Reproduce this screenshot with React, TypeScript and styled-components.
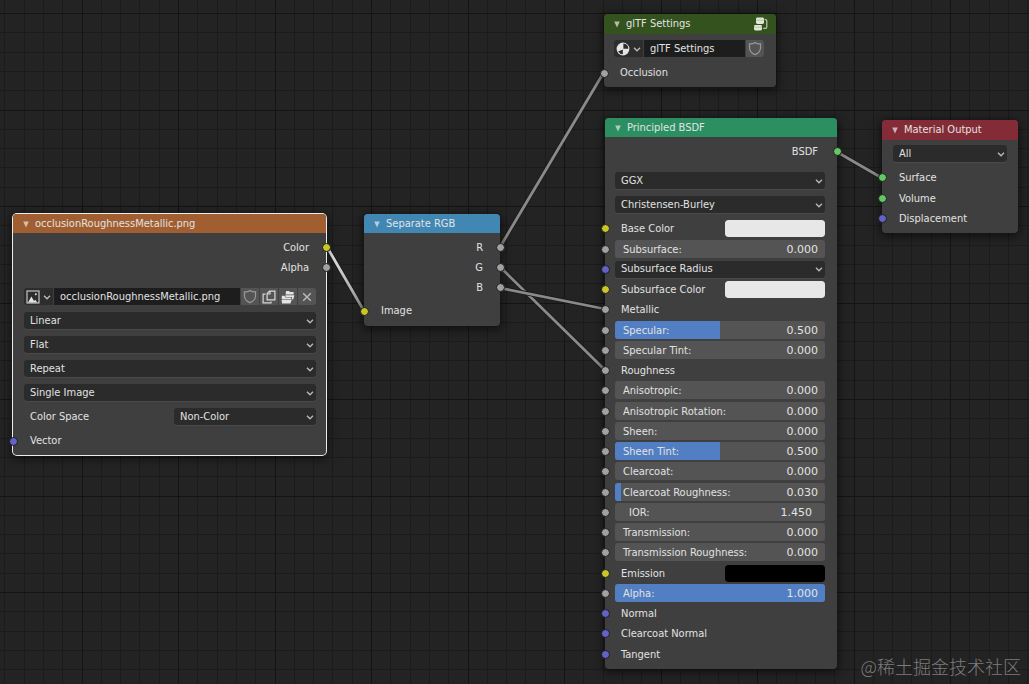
import React, { useId, useState } from 'react';
import styled, { createGlobalStyle } from 'styled-components';

const ui = '"DejaVu Sans Condensed", "DejaVu Sans", sans-serif';
const numeric = '"DejaVu Sans", sans-serif';

const GlobalStyle = createGlobalStyle`
  *, *::before, *::after { box-sizing: border-box; }
  body { margin: 0; background: #232323; overflow: hidden; }
  button, input, select { font: inherit; color: inherit; margin: 0; padding: 0; border: 0; border-radius: 0; background: none; }
  :focus-visible { outline: 1px solid #527fc3; }
`;

const Canvas = styled.main`
  position: relative;
  min-height: 100vh;
  overflow: hidden;
  background: #232323;
  color: #e2e2e2;
  font: 11px/16px ${ui};
`;

const Layer = styled.svg`
  position: absolute;
  inset: 0;
  width: 100%;
  height: 100%;
`;

const Frame = styled.section<{ $x: number; $y: number; $width: number; $left: number; $right: number; $active?: boolean }>`
  --pad-left: ${(p) => p.$left}px;
  --pad-right: ${(p) => p.$right}px;
  position: absolute;
  left: ${(p) => p.$x}px;
  top: ${(p) => p.$y}px;
  width: ${(p) => p.$width}px;
  border-radius: 4px;
  background: #3f3f3f;
  box-shadow: ${(p) => (p.$active ? '0 0 0 1px #ececec, ' : '')}0 2px 8px 2px rgba(0, 0, 0, 0.5);
`;

const Header = styled.header<{ $color: string; $height: number }>`
  display: flex;
  align-items: center;
  gap: 5px;
  height: ${(p) => p.$height}px;
  padding: 0 8px 0 9px;
  border-radius: 4px 4px 0 0;
  background: ${(p) => p.$color};
`;

const Title = styled.h2`
  flex: 1;
  margin: 0;
  font: inherit;
  white-space: nowrap;
`;

const Collapse = styled.button`
  display: flex;
  align-items: center;
  width: 8px;
  height: 16px;
  opacity: 0.75;
`;

const Body = styled.div<{ $top: number; $bottom: number }>`
  padding: ${(p) => p.$top}px 0 ${(p) => p.$bottom}px;
`;

const Row = styled.div<{ $tall?: boolean }>`
  position: relative;
  display: flex;
  align-items: center;
  height: ${(p) => (p.$tall ? 24 : 20)}px;
  padding: 0 var(--pad-right) ${(p) => (p.$tall ? 1 : 0)}px var(--pad-left);
`;

const Group = styled.div<{ $gap: number }>`
  margin-top: ${(p) => p.$gap}px;
`;

const Inputs = styled(Group)`
  ${Row}:nth-child(4n + 1) { margin-bottom: 1px; }
`;

const Label = styled.span<{ $end?: boolean }>`
  flex: 1;
  padding: 1px 7px 0 6px;
  text-align: ${(p) => (p.$end ? 'right' : 'left')};
  white-space: nowrap;
`;

const socketColors = { color: '#c7c729', value: '#a1a1a1', vector: '#6363c7', shader: '#63c763' };
type SocketKind = keyof typeof socketColors;

const Socket = styled.i<{ $kind: SocketKind; $out?: boolean }>`
  position: absolute;
  top: 50%;
  ${(p) => (p.$out ? 'right: -5px' : 'left: -4px')};
  width: 9px;
  height: 9px;
  margin-top: -4px;
  border: 1px solid #1c1c1c;
  border-radius: 50%;
  background: ${(p) => socketColors[p.$kind]};
`;

const SelectBox = styled.span`
  flex: 1;
  display: grid;
  align-items: center;
  height: 17px;
  border-radius: 3px;
  background: #2b2b2b;
  box-shadow: 0 1px 0 #4a4a4a;
  > * { grid-area: 1 / 1; }
  > svg { justify-self: end; margin-right: 1px; pointer-events: none; }
`;

const NativeSelect = styled.select`
  width: 100%;
  height: 17px;
  padding: 0 16px 0 6px;
  appearance: none;
`;

const FieldBox = styled.label`
  flex: 1;
  display: grid;
  grid-template-columns: 1fr auto;
  align-items: center;
  height: 18px;
  border-radius: 3px;
  overflow: hidden;
  background: #545454;
`;

const Range = styled.input`
  grid-area: 1 / 1 / 2 / 3;
  width: 100%;
  height: 18px;
  appearance: none;
  background: linear-gradient(#527fc3, #527fc3) 0 0 / var(--fill) 100% no-repeat;
  &::-webkit-slider-thumb { appearance: none; width: 1px; height: 18px; background: transparent; }
`;

const FieldName = styled.span<{ $pad: number }>`
  grid-area: 1 / 1;
  padding: 1px 0 0 ${(p) => p.$pad}px;
  white-space: nowrap;
  pointer-events: none;
`;

const FieldValue = styled.output`
  grid-area: 1 / 2;
  padding: 1px 7px 0 0;
  font-family: ${numeric};
  pointer-events: none;
`;

const NumberInput = styled.input`
  grid-area: 1 / 2;
  width: 60px;
  padding: 1px 13px 0 0;
  font-family: ${numeric};
  text-align: right;
`;

const Swatch = styled.input`
  width: 100px;
  height: 17px;
  appearance: none;
  border-radius: 3px;
  overflow: hidden;
  &::-webkit-color-swatch-wrapper { padding: 0; }
  &::-webkit-color-swatch { border: 0; border-radius: 3px; }
`;

const SwatchRow = styled.label`
  flex: 1;
  display: flex;
  align-items: center;
`;

const DataBlock = styled.div`
  flex: 1;
  display: flex;
  gap: 1px;
  height: 17px;
  border-radius: 3px;
  overflow: hidden;
`;

const Browse = styled.button`
  display: flex;
  align-items: center;
  justify-content: space-between;
  width: 29px;
  padding: 0 1px 0 2px;
  background: #2d2d2d;
`;

const NameInput = styled.input`
  flex: 1;
  min-width: 0;
  padding: 0 6px;
  background: #1d1d1d;
`;

const IconButton = styled.button`
  display: flex;
  align-items: center;
  justify-content: center;
  width: 18px;
  background: #545454;
`;

const ColorSpaceLabel = styled.label`
  flex: 1;
  padding: 1px 0 0 6px;
`;

const HalfWidth = styled.div`
  display: flex;
  width: 142px;
`;

const Watermark = styled.p`
  position: absolute;
  right: 8px;
  bottom: 6px;
  margin: 0;
  color: #7c7c7c;
  font: 300 18px/24px "Noto Sans CJK SC", sans-serif;
`;

const Chevron = () => (
  <svg width="10" height="10" viewBox="0 0 10 10" fill="none" stroke="#b8b8b8" strokeWidth="1.4" aria-hidden="true">
    <path d="M2 3.7 5 6.7 8 3.7" />
  </svg>
);

const Triangle = () => (
  <svg width="8" height="8" viewBox="0 0 8 8" fill="#e2e2e2" aria-hidden="true">
    <path d="M1.2 1.4H6.8L4 7.6Z" />
  </svg>
);

const ShieldIcon = () => (
  <svg width="14" height="15" viewBox="0 0 14 15" fill="none" stroke="#989898" strokeWidth="1.2" aria-hidden="true">
    <path d="M7 1.5C5.5 2.7 3.6 3 1.5 2.9V7.2C1.7 10.3 4 12.4 7 13.6 10 12.4 12.3 10.3 12.5 7.2V2.9C10.4 3 8.5 2.7 7 1.5Z" />
  </svg>
);

const MaterialIcon = () => (
  <svg width="14" height="14" viewBox="0 0 14 14" aria-hidden="true">
    <circle cx="7" cy="7" r="6.4" fill="#e4e4e4" />
    <path d="M7.4 1.6V6.8H12.3A5.3 5.3 0 0 0 7.4 1.6Z" fill="#2d2d2d" />
    <path d="M6.8 7.4V12.3A5.3 5.3 0 0 1 2.2 9.6Z" fill="#2d2d2d" />
  </svg>
);

const ImageIcon = () => (
  <svg width="14" height="14" viewBox="0 0 14 14" aria-hidden="true">
    <rect x="1" y="1" width="12" height="12" fill="none" stroke="#d2d2d2" strokeWidth="1.1" />
    <path d="M2 12.4 5.4 6.4 8 11 9.2 9.8 11.4 12.4Z" fill="#e4e4e4" />
    <circle cx="9.8" cy="4.3" r="1" fill="#e4e4e4" />
  </svg>
);

const DuplicateIcon = () => (
  <svg width="14" height="14" viewBox="0 0 14 14" fill="none" stroke="#d8d8d8" strokeWidth="1.2" aria-hidden="true">
    <path d="M7.5 1.1H12.9V9.9H5.1V3.5Z" />
    <path d="M5.1 4H8V1.1" />
    <path d="M3.5 4.1H1.1V12.9H9V11.5" />
  </svg>
);

const OpenIcon = () => (
  <svg width="14" height="14" viewBox="0 0 14 14" fill="#e4e4e4" aria-hidden="true">
    <path d="M5 1H8L9 2H12.6V4.6H4.6Z" />
    <path d="M4.4 5.2H13.4L12.2 9.4H10.8V7H4.4Z" />
    <path d="M.8 5.8H3.4L4.4 7.6H10V9.2H.8Z" />
    <path d="M.6 9.8H10.8L9.4 13.4H1Z" />
  </svg>
);

const CloseIcon = () => (
  <svg width="10" height="10" viewBox="0 0 10 10" stroke="#bcbcbc" strokeWidth="1.4" aria-hidden="true">
    <path d="M1.2 1.2 8.8 8.8M8.8 1.2 1.2 8.8" />
  </svg>
);

const NodeGroupIcon = () => (
  <svg width="15" height="14" viewBox="0 0 15 14" aria-hidden="true">
    <rect x="3" y=".6" width="8" height="6.4" rx="1.4" fill="#dfe8d8" />
    <path d="M3 3.2H11" stroke="#a9bd9b" strokeWidth=".8" />
    <rect x="1" y="8" width="8" height="5.4" rx="1.4" fill="#dfe8d8" />
    <path d="M1 10.2H9" stroke="#a9bd9b" strokeWidth=".8" />
    <path d="M11.6 2.6H12.6Q13.8 2.6 13.8 3.8V10Q13.8 11.4 12.6 11.4H10.2" fill="none" stroke="#b9cbad" strokeWidth="1.2" />
  </svg>
);

function NodeHeader({ title, color, height, children }: { title: string; color: string; height: number; children?: React.ReactNode }) {
  return (
    <Header $color={color} $height={height}>
      <Collapse type="button" aria-label={`Collapse ${title}`}><Triangle /></Collapse>
      <Title>{title}</Title>
      {children}
    </Header>
  );
}

function Select({ name, value, id }: { name: string; value: string; id?: string }) {
  return (
    <SelectBox>
      <NativeSelect id={id} aria-label={id ? undefined : name} defaultValue={value}>
        <option>{value}</option>
      </NativeSelect>
      <Chevron />
    </SelectBox>
  );
}

function Output({ name, kind }: { name: string; kind: SocketKind }) {
  return <Row><Label $end>{name}</Label><Socket $kind={kind} $out /></Row>;
}

function Input({ name, kind, tall }: { name: string; kind: SocketKind; tall?: boolean }) {
  return <Row $tall={tall}><Socket $kind={kind} /><Label>{name}</Label></Row>;
}

function Slider({ name, initial }: { name: string; initial: number }) {
  const [value, setValue] = useState(initial);
  const id = useId();
  return (
    <Row>
      <Socket $kind="value" />
      <FieldBox htmlFor={id}>
        <Range
          id={id}
          type="range"
          min="0"
          max="1"
          step="0.001"
          value={value}
          style={{ '--fill': `${value * 100}%` } as React.CSSProperties}
          onChange={(e) => setValue(Number(e.target.value))}
        />
        <FieldName $pad={8}>{name}:</FieldName>
        <FieldValue htmlFor={id}>{value.toFixed(3)}</FieldValue>
      </FieldBox>
    </Row>
  );
}

function NumberField({ name, value }: { name: string; value: string }) {
  return (
    <Row>
      <Socket $kind="value" />
      <FieldBox>
        <FieldName $pad={14}>{name}:</FieldName>
        <NumberInput type="text" inputMode="decimal" defaultValue={value} />
      </FieldBox>
    </Row>
  );
}

function ColorField({ name, value }: { name: string; value: string }) {
  return (
    <Row>
      <Socket $kind="color" />
      <SwatchRow>
        <Label>{name}</Label>
        <Swatch type="color" defaultValue={value} />
      </SwatchRow>
    </Row>
  );
}

// The grid repeats every 19.3px; each line is rounded to a whole pixel so it stays crisp.
function gridPath(every: number) {
  let d = '';
  for (let i = 0; i < 200; i += every) {
    const offset = Math.round((i * 193) / 10);
    d += `M${offset - 15} 0V2400M0 ${offset + 13}H4000`;
  }
  return d;
}

const minorGrid = gridPath(1);
const majorGrid = gridPath(5);

const links = [
  { d: 'M500 247 604 72', color: '#8a8a8a' },
  { d: 'M500 267 605 370', color: '#8a8a8a' },
  { d: 'M500 288 605 309', color: '#8a8a8a' },
  { d: 'M837 152 882 178', color: '#8a8a8a' },
  { d: 'M327 247 364 311', color: 'url(#active-link)' },
];

export default function App() {
  return (
    <Canvas>
      <GlobalStyle />
      <Layer aria-hidden="true" fill="none" shapeRendering="crispEdges">
        <path d={minorGrid} stroke="#1b1b1b" />
        <path d={majorGrid} stroke="#141414" />
      </Layer>
      <Layer aria-hidden="true" fill="none">
        <defs>
          <linearGradient id="active-link" x1="0" y1="0" x2="0" y2="1">
            <stop offset="0" stopColor="#f0f0f0" />
            <stop offset="1" stopColor="#8f8f8f" />
          </linearGradient>
        </defs>
        {links.map((link) => (
          <g key={link.d}>
            <path d={link.d} stroke="#1a1a1a" strokeWidth="4.4" />
            <path d={link.d} stroke={link.color} strokeWidth="2.8" />
          </g>
        ))}
      </Layer>

      <Frame $x={13} $y={214} $width={313} $left={11} $right={10} $active>
        <NodeHeader title="occlusionRoughnessMetallic.png" color="#a05e31" height={19} />
        <Body $top={4} $bottom={2}>
          <Output name="Color" kind="color" />
          <Output name="Alpha" kind="value" />
          <Group $gap={8}>
            <Row $tall>
              <DataBlock>
                <Browse type="button" aria-label="Browse images"><ImageIcon /><Chevron /></Browse>
                <NameInput aria-label="Image name" defaultValue="occlusionRoughnessMetallic.png" />
                <IconButton type="button" aria-label="Fake user"><ShieldIcon /></IconButton>
                <IconButton type="button" aria-label="New image"><DuplicateIcon /></IconButton>
                <IconButton type="button" aria-label="Open image"><OpenIcon /></IconButton>
                <IconButton type="button" aria-label="Unlink image"><CloseIcon /></IconButton>
              </DataBlock>
            </Row>
            <Row $tall><Select name="Interpolation" value="Linear" /></Row>
            <Row $tall><Select name="Projection" value="Flat" /></Row>
            <Row $tall><Select name="Extension" value="Repeat" /></Row>
            <Row $tall><Select name="Source" value="Single Image" /></Row>
            <Row $tall>
              <ColorSpaceLabel htmlFor="color-space">Color Space</ColorSpaceLabel>
              <HalfWidth><Select id="color-space" name="Color Space" value="Non-Color" /></HalfWidth>
            </Row>
            <Input name="Vector" kind="vector" tall />
          </Group>
        </Body>
      </Frame>

      <Frame $x={364} $y={214} $width={136} $left={11} $right={10}>
        <NodeHeader title="Separate RGB" color="#4087b4" height={19} />
        <Body $top={4} $bottom={3}>
          <Output name="R" kind="value" />
          <Output name="G" kind="value" />
          <Output name="B" kind="value" />
          <Group $gap={2}><Input name="Image" kind="color" tall /></Group>
        </Body>
      </Frame>

      <Frame $x={604} $y={14} $width={172} $left={10} $right={12}>
        <NodeHeader title="glTF Settings" color="#34521d" height={20}><NodeGroupIcon /></NodeHeader>
        <Body $top={3} $bottom={2}>
          <Row $tall>
            <DataBlock>
              <Browse type="button" aria-label="Browse node groups"><MaterialIcon /><Chevron /></Browse>
              <NameInput aria-label="Node group name" defaultValue="glTF Settings" />
              <IconButton type="button" aria-label="Fake user"><ShieldIcon /></IconButton>
            </DataBlock>
          </Row>
          <Input name="Occlusion" kind="value" tall />
        </Body>
      </Frame>

      <Frame $x={605} $y={118} $width={232} $left={10} $right={12}>
        <NodeHeader title="Principled BSDF" color="#2b8f62" height={19} />
        <Body $top={4} $bottom={5}>
          <Output name="BSDF" kind="shader" />
          <Group $gap={8}>
            <Row $tall><Select name="Distribution" value="GGX" /></Row>
            <Row $tall><Select name="Subsurface method" value="Christensen-Burley" /></Row>
          </Group>
          <Inputs $gap={1}>
            <ColorField name="Base Color" value="#e7e7e7" />
            <Slider name="Subsurface" initial={0} />
            <Row><Socket $kind="vector" /><Select name="Subsurface Radius" value="Subsurface Radius" /></Row>
            <ColorField name="Subsurface Color" value="#e7e7e7" />
            <Input name="Metallic" kind="value" />
            <Slider name="Specular" initial={0.5} />
            <Slider name="Specular Tint" initial={0} />
            <Input name="Roughness" kind="value" />
            <Slider name="Anisotropic" initial={0} />
            <Slider name="Anisotropic Rotation" initial={0} />
            <Slider name="Sheen" initial={0} />
            <Slider name="Sheen Tint" initial={0.5} />
            <Slider name="Clearcoat" initial={0} />
            <Slider name="Clearcoat Roughness" initial={0.03} />
            <NumberField name="IOR" value="1.450" />
            <Slider name="Transmission" initial={0} />
            <Slider name="Transmission Roughness" initial={0} />
            <ColorField name="Emission" value="#000000" />
            <Slider name="Alpha" initial={1} />
            <Input name="Normal" kind="vector" />
            <Input name="Clearcoat Normal" kind="vector" />
            <Input name="Tangent" kind="vector" />
          </Inputs>
        </Body>
      </Frame>

      <Frame $x={882} $y={120} $width={136} $left={11} $right={11}>
        <NodeHeader title="Material Output" color="#832b36" height={20} />
        <Body $top={2} $bottom={5}>
          <Row $tall><Select name="Target" value="All" /></Row>
          <Inputs $gap={1}>
            <Input name="Surface" kind="shader" />
            <Input name="Volume" kind="shader" />
            <Input name="Displacement" kind="vector" />
          </Inputs>
        </Body>
      </Frame>

      <Watermark>@稀土掘金技术社区</Watermark>
    </Canvas>
  );
}
